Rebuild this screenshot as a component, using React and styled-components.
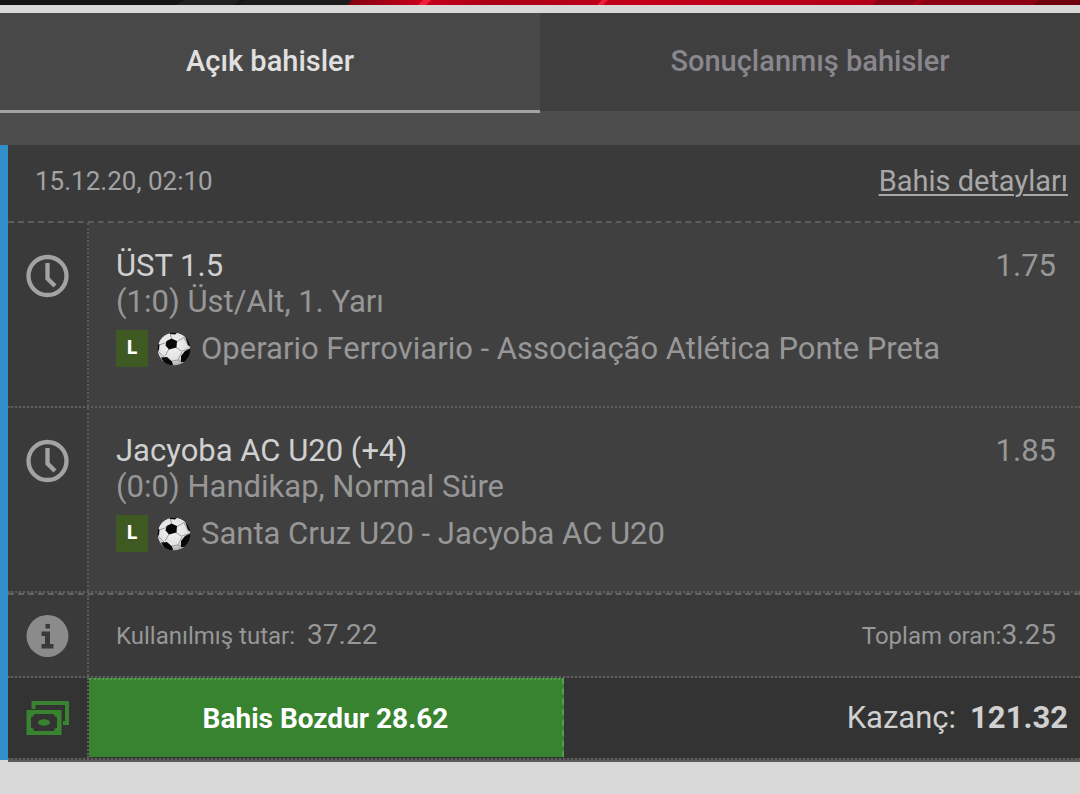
import React from "react";
import styled, { createGlobalStyle } from "styled-components";

const colors = {
  page: '#d8d8d8',
  strip: '#4d4d4d',
  row: '#404040',
  side: '#3a3a3a',
  payout: '#333333',
  line: '#5c5c5c',
  blue: '#338fcc',
  green: '#37832f',
  text: '#d0d0d0',
  muted: '#979797'
};

const GlobalStyle = createGlobalStyle`
  * {
    box-sizing: border-box;
  }

  body {
    margin: 0;
    background: ${colors.page};
    color: ${colors.muted};
    font-family: Roboto, "Liberation Sans", sans-serif;
    font-size: 31px;
    line-height: 36px;
  }
`;

const Banner = styled.div`
  height: 5px;
  overflow: hidden;

  svg {
    display: block;
    width: 100%;
    height: 5px;
  }
`;

const Tabs = styled.nav`
  display: flex;
  align-items: flex-start;
  margin-top: 8px;
  padding-bottom: 32px;
  background: ${colors.strip};
`;

const Tab = styled.button`
  flex: 1;
  height: ${props => props.$active ? 100 : 98}px;
  padding: 0 0 2px;
  border: 0;
  border-bottom: ${props => props.$active ? '3px solid #a3a3a3' : '0'};
  background: ${props => props.$active ? '#484848' : '#3f3f3f'};
  color: ${props => props.$active ? '#e0e0e0' : '#89878d'};
  font-family: inherit;
  font-size: 29px;
  font-weight: 500;
  line-height: 36px;
`;

const Slip = styled.main`
  border-left: 8px solid ${colors.blue};
`;

const SlipHeader = styled.header`
  display: flex;
  align-items: center;
  justify-content: space-between;
  height: 78px;
  padding: 0 12px 4px 27px;
  border-bottom: 2px dashed ${colors.line};
  background: ${colors.side};
`;

const BetDate = styled.time`
  font-size: 26px;
  color: #a3a3a3;
`;

const DetailsLink = styled.a`
  color: #a8a8a8;
  font-size: 29px;
  text-decoration: underline;
  text-decoration-thickness: 2px;
  text-underline-offset: 3px;
`;

const Row = styled.section`
  display: grid;
  grid-template-columns: 81px 1fr;
  border-bottom: 2px dotted ${colors.line};
  background: ${colors.row};
`;

const SideCell = styled.div`
  display: flex;
  justify-content: center;
  align-items: ${props => props.$middle ? 'center' : 'flex-start'};
  padding-top: ${props => props.$middle ? 0 : 31}px;
  border-right: 2px dotted ${colors.line};
  background: ${props => props.$dark ? colors.payout : colors.side};

  svg {
    display: block;
  }
`;

const BetBody = styled.div`
  display: flex;
  justify-content: space-between;
  padding: 25px 24px 39px 27px;
`;

const Pick = styled.h2`
  margin: 0;
  color: ${colors.text};
  font-size: 31px;
  font-weight: 400;
`;

const Market = styled.p`
  margin: 0;
`;

const Match = styled.p`
  display: flex;
  align-items: center;
  margin: 10px 0 0;
`;

const LiveBadge = styled.span`
  width: 32px;
  height: 37px;
  margin-right: 9px;
  background: #3f5923;
  color: #fff;
  font-family: "Open Sans", sans-serif;
  font-size: 20px;
  font-weight: 700;
  line-height: 34px;
  text-align: center;
`;

const Teams = styled.span`
  margin-left: 10px;
`;

const Totals = styled.div`
  display: flex;
  align-items: center;
  justify-content: space-between;
  height: 81px;
  padding: 0 24px 0 27px;
  background: ${colors.side};
  font-size: 24px;
`;

const Amount = styled.span`
  margin-left: ${props => props.$gap ? 12 : 0}px;
  font-size: 28px;
`;

const Divider = styled.hr`
  margin: 0;
  border: 0;
  border-bottom: 2px dashed #636363;
  background: ${colors.side};
`;

const Payout = styled.div`
  display: grid;
  grid-template-columns: 475px 1fr;
  height: 80px;
  background: ${colors.payout};
`;

const CashOut = styled.button`
  height: 79px;
  padding: 0;
  border: 0;
  border-top: 2px dotted #559c4f;
  border-right: 2px dashed #559c4f;
  background: ${colors.green};
  color: #fff;
  font-family: inherit;
  font-size: 28px;
  font-weight: 700;
`;

const Winnings = styled.div`
  display: flex;
  align-items: center;
  justify-content: flex-end;
  padding-right: 12px;
  color: ${colors.text};

  strong {
    margin-left: 14px;
    font-weight: 700;
  }
`;

const SlipEnd = styled.div`
  height: 2px;
  background: #5a5a5a;
  margin-left: 8px;
`;

const ClockIcon = () => (
  <svg width="44" height="44" viewBox="0 0 44 44" fill="none" stroke="#a3a3a3" aria-hidden="true">
    <circle cx="21.5" cy="22" r="19" strokeWidth="4.3" />
    <path d="M21.5 9v15.500l7.500 7.500" strokeWidth="4.3" />
  </svg>
);

const InfoIcon = () => (
  <svg width="44" height="44" viewBox="0 0 44 44" aria-hidden="true">
    <circle cx="21.5" cy="22" r="21" fill="#8b8b8b" />
    <path d="M19.500 10h4.500v4.500h-4.500zM15.500 17.500h8.500v12.500h3.500v4.500h-12v-4.500h3.500v-8h-3.500z" fill={colors.side} />
  </svg>
);

const CashIcon = () => (
  <svg width="44" height="36" viewBox="0 0 44 36" fill={colors.green} aria-hidden="true">
    <path d="M5.500 1H43v24h-6v-4h2V5H9.500v4h-4z" />
    <path
      fillRule="evenodd"
      d="M.5 10h35v25H.5zM8 14q0 3-3 3v11q3 0 3 3h20q0-3 3-3V17q-3 0-3-3z"
    />
    <ellipse cx="18" cy="22.500" rx="6" ry="3.200" />
  </svg>
);

const BallIcon = () => (
  <svg width="34" height="34" viewBox="0 0 34 34" aria-hidden="true">
    <defs>
      <radialGradient id="ball" cx="0.45" cy="0.4" r="0.6">
        <stop offset="0" stopColor="#f4f4f4" />
        <stop offset="0.7" stopColor="#e2e2e2" />
        <stop offset="1" stopColor="#a9a9a9" />
      </radialGradient>
      <clipPath id="ball-edge">
        <circle cx="17" cy="17" r="16.500" />
      </clipPath>
    </defs>
    <g clipPath="url(#ball-edge)">
      <circle cx="17" cy="17" r="16.500" fill="url(#ball)" />
      <path
        d="M14.500 7 13 0M20 9.500l7-4M19 15.500l6 4M12 17l-4 7M9.500 10.500 2 13M25 19l6-2M25 20l-4 8M1 19l6 6M15 29l6-1M27 5.500l4 8M21 28l4 2"
        fill="none"
        stroke="#8c8c8c"
        strokeWidth="0.800"
      />
      <path
        d="M9.500 9l5-2.500 5.500 2.500-.5 6.500-7.500 2-3.500-4zM0 11l2.500 1.500L2 18l-2 2zM4 25.500l6-.5 5 4.500 1 3.500-7 1zM24 24l4-5 6-3v8l-5 6-5 0zM28 4l5 5 1 6-3-2zM12 0l9 0-3 2.500-5-.5z"
        fill="#080808"
      />
    </g>
  </svg>
);

const bets = [
  {
    id: 1,
    pick: 'ÜST 1.5',
    market: '(1:0) Üst/Alt, 1. Yarı',
    teams: 'Operario Ferroviario - Associação Atlética Ponte Preta',
    odds: '1.75'
  },
  {
    id: 2,
    pick: 'Jacyoba AC U20 (+4)',
    market: '(0:0) Handikap, Normal Süre',
    teams: 'Santa Cruz U20 - Jacyoba AC U20',
    odds: '1.85'
  }
];

const Bet = ({ pick, market, teams, odds }) => (
  <Row>
    <SideCell>
      <ClockIcon />
    </SideCell>
    <BetBody>
      <div>
        <Pick>{pick}</Pick>
        <Market>{market}</Market>
        <Match>
          <LiveBadge>L</LiveBadge>
          <BallIcon />
          <Teams>{teams}</Teams>
        </Match>
      </div>
      <span>{odds}</span>
    </BetBody>
  </Row>
);

const App = () => (
  <>
    <GlobalStyle />
    <Banner>
      <svg viewBox="0 0 1080 5" preserveAspectRatio="none" aria-hidden="true">
        <defs>
          <linearGradient id="banner-red">
            <stop offset="0" stopColor="#80000f" />
            <stop offset="0.1" stopColor="#c8001c" />
            <stop offset="0.2" stopColor="#a90015" />
            <stop offset="0.4" stopColor="#c4001a" />
            <stop offset="0.75" stopColor="#b00018" />
            <stop offset="1" stopColor="#780010" />
          </linearGradient>
        </defs>
        <path d="M0 0h1080v5H0z" fill="#151515" />
        <path d="M176 5l8-5h56l-6 5z" fill="#202020" />
        <path d="M240 5l5-5h107l-5 5z" fill="#1c1c1c" />
        <path d="M347 5l5-5h728v5z" fill="url(#banner-red)" />
        <path d="M418 5l5-5h8l-5 5zM597 5l5-5h6l-5 5z" fill="#f0203c" />
        <path d="M872 5l5-5h40l-5 5zM917 5l5-5h120l-5 5z" fill="#8c0013" />
        <path d="M1034 5l5-5h41v5z" fill="#70000e" />
      </svg>
    </Banner>
    <Tabs>
      <Tab $active type="button">Açık bahisler</Tab>
      <Tab type="button">Sonuçlanmış bahisler</Tab>
    </Tabs>
    <Slip>
      <SlipHeader>
        <BetDate dateTime="2020-12-15T02:10">15.12.20, 02:10</BetDate>
        <DetailsLink href="#details">Bahis detayları</DetailsLink>
      </SlipHeader>
      {bets.map(item => <Bet key={item.id} {...item} />)}
      <Divider />
      <Row>
        <SideCell $middle>
          <InfoIcon />
        </SideCell>
        <Totals>
          <span>Kullanılmış tutar:<Amount $gap>37.22</Amount></span>
          <span>Toplam oran:<Amount>3.25</Amount></span>
        </Totals>
      </Row>
      <Row>
        <SideCell $middle $dark>
          <CashIcon />
        </SideCell>
        <Payout>
          <CashOut type="button">Bahis Bozdur 28.62</CashOut>
          <Winnings>Kazanç:<strong>121.32</strong></Winnings>
        </Payout>
      </Row>
    </Slip>
    <SlipEnd />
  </>
);

export default App;
